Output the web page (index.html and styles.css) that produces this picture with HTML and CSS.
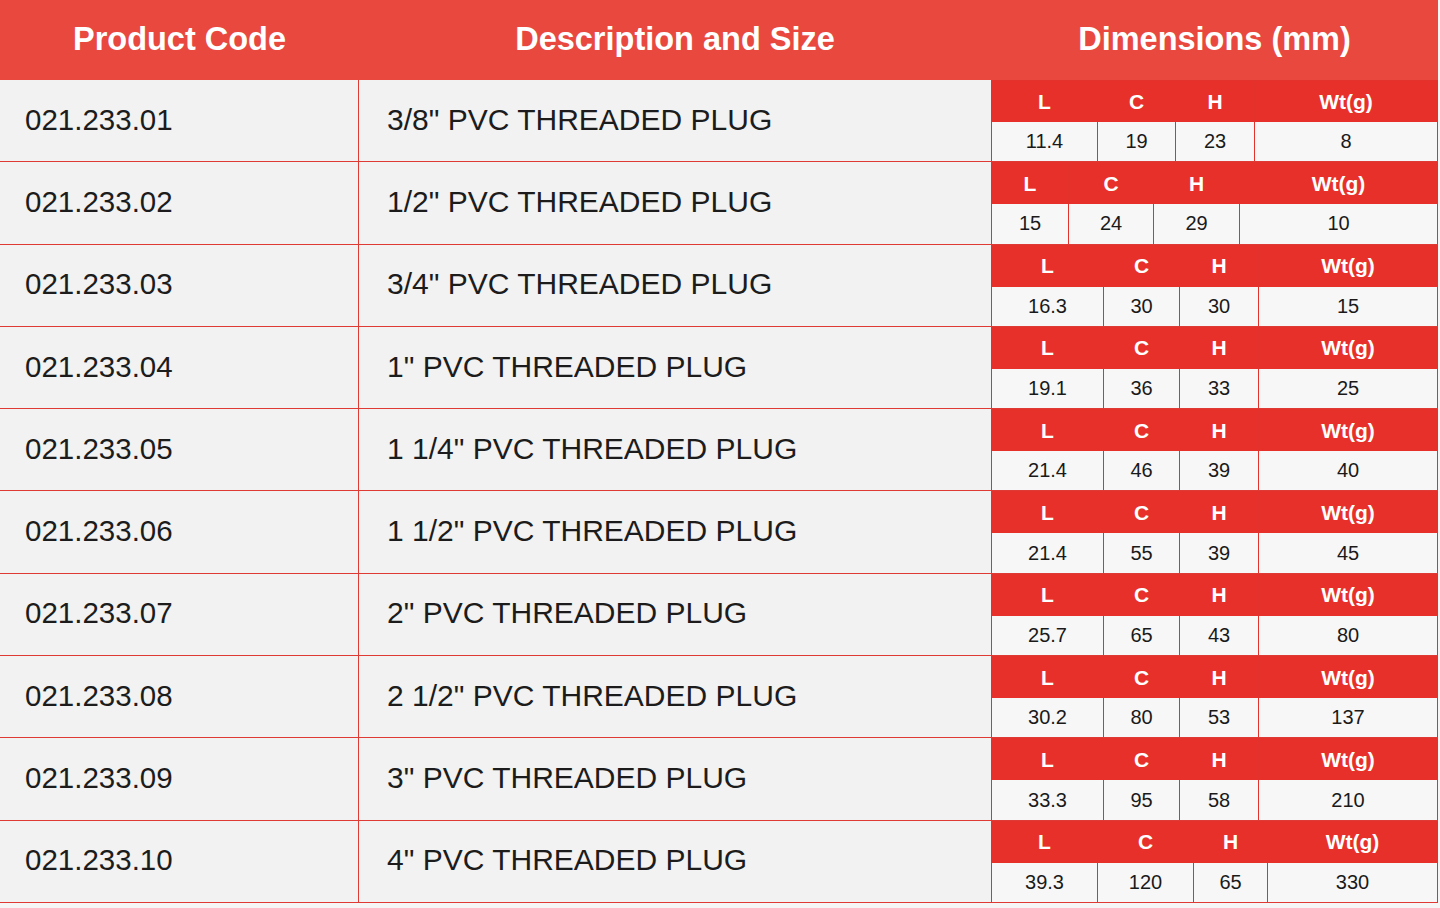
FILE: index.html
```html
<!DOCTYPE html>
<html lang="en">
<head>
<meta charset="utf-8">
<title>PVC Threaded Plug</title>
<link rel="stylesheet" href="styles.css">
</head>
<body>
<div class="table">
  <div class="head">
    <div class="hcell">Product Code</div>
    <div class="hcell">Description and Size</div>
    <div class="hcell">Dimensions (mm)</div>
  </div>

  <div class="row">
    <div class="code">021.233.01</div>
    <div class="desc">3/8" PVC THREADED PLUG</div>
    <div class="dims dims-a">
      <div class="lab">L</div><div class="lab">C</div><div class="lab">H</div><div class="lab">Wt(g)</div>
      <div class="val">11.4</div><div class="val">19</div><div class="val">23</div><div class="val">8</div>
    </div>
  </div>

  <div class="row">
    <div class="code">021.233.02</div>
    <div class="desc">1/2" PVC THREADED PLUG</div>
    <div class="dims dims-b">
      <div class="lab">L</div><div class="lab">C</div><div class="lab">H</div><div class="lab">Wt(g)</div>
      <div class="val">15</div><div class="val">24</div><div class="val">29</div><div class="val">10</div>
    </div>
  </div>

  <div class="row">
    <div class="code">021.233.03</div>
    <div class="desc">3/4" PVC THREADED PLUG</div>
    <div class="dims dims-c">
      <div class="lab">L</div><div class="lab">C</div><div class="lab">H</div><div class="lab">Wt(g)</div>
      <div class="val">16.3</div><div class="val">30</div><div class="val">30</div><div class="val">15</div>
    </div>
  </div>

  <div class="row">
    <div class="code">021.233.04</div>
    <div class="desc">1" PVC THREADED PLUG</div>
    <div class="dims dims-c">
      <div class="lab">L</div><div class="lab">C</div><div class="lab">H</div><div class="lab">Wt(g)</div>
      <div class="val">19.1</div><div class="val">36</div><div class="val">33</div><div class="val">25</div>
    </div>
  </div>

  <div class="row">
    <div class="code">021.233.05</div>
    <div class="desc">1 1/4" PVC THREADED PLUG</div>
    <div class="dims dims-c">
      <div class="lab">L</div><div class="lab">C</div><div class="lab">H</div><div class="lab">Wt(g)</div>
      <div class="val">21.4</div><div class="val">46</div><div class="val">39</div><div class="val">40</div>
    </div>
  </div>

  <div class="row">
    <div class="code">021.233.06</div>
    <div class="desc">1 1/2" PVC THREADED PLUG</div>
    <div class="dims dims-c">
      <div class="lab">L</div><div class="lab">C</div><div class="lab">H</div><div class="lab">Wt(g)</div>
      <div class="val">21.4</div><div class="val">55</div><div class="val">39</div><div class="val">45</div>
    </div>
  </div>

  <div class="row">
    <div class="code">021.233.07</div>
    <div class="desc">2" PVC THREADED PLUG</div>
    <div class="dims dims-c">
      <div class="lab">L</div><div class="lab">C</div><div class="lab">H</div><div class="lab">Wt(g)</div>
      <div class="val">25.7</div><div class="val">65</div><div class="val">43</div><div class="val">80</div>
    </div>
  </div>

  <div class="row">
    <div class="code">021.233.08</div>
    <div class="desc">2 1/2" PVC THREADED PLUG</div>
    <div class="dims dims-c">
      <div class="lab">L</div><div class="lab">C</div><div class="lab">H</div><div class="lab">Wt(g)</div>
      <div class="val">30.2</div><div class="val">80</div><div class="val">53</div><div class="val">137</div>
    </div>
  </div>

  <div class="row">
    <div class="code">021.233.09</div>
    <div class="desc">3" PVC THREADED PLUG</div>
    <div class="dims dims-c">
      <div class="lab">L</div><div class="lab">C</div><div class="lab">H</div><div class="lab">Wt(g)</div>
      <div class="val">33.3</div><div class="val">95</div><div class="val">58</div><div class="val">210</div>
    </div>
  </div>

  <div class="row">
    <div class="code">021.233.10</div>
    <div class="desc">4" PVC THREADED PLUG</div>
    <div class="dims dims-d">
      <div class="lab">L</div><div class="lab">C</div><div class="lab">H</div><div class="lab">Wt(g)</div>
      <div class="val">39.3</div><div class="val">120</div><div class="val">65</div><div class="val">330</div>
    </div>
  </div>
</div>
</body>
</html>
```

FILE: styles.css
```css
html, body {
  margin: 0;
  padding: 0;
}

body {
  background: #f6f6f6;
  font-family: "Liberation Sans", Arial, sans-serif;
  color: #1c1c1c;
  width: 1440px;
  height: 908px;
  overflow: hidden;
}

.table {
  width: 1438px;
  display: flex;
  flex-direction: column;
}

.head {
  height: 80px;
  background: #e9483f;
  display: grid;
  grid-template-columns: 359px 632px 1fr;
  align-items: center;
}

.hcell {
  color: #ffffff;
  font-weight: 700;
  font-size: 32.5px;
  text-align: center;
  padding-bottom: 2px;
}

.row {
  height: 82.3px;
  box-sizing: border-box;
  border-bottom: 1px solid #df3a34;
  background: #f2f2f2;
  display: grid;
  grid-template-columns: 359px 632px 1fr;
}

.code {
  border-right: 1px solid #df3a34;
  display: flex;
  align-items: center;
  padding-left: 25px;
  padding-bottom: 2px;
  font-size: 29.5px;
}

.desc {
  display: flex;
  align-items: center;
  padding-left: 28px;
  padding-bottom: 2px;
  font-size: 30px;
}

.dims {
  display: grid;
  grid-template-rows: 41px 1fr;
  column-gap: 1px;
  background: #e3322b;
  padding: 1px 1px 0 1px;
}

.dims-a { grid-template-columns: 105px 77px 78px 1fr; }
.dims-b { grid-template-columns: 76px 84px 85px 1fr; }
.dims-c { grid-template-columns: 111px 75px 78px 1fr; }
.dims-d { grid-template-columns: 105px 95px 73px 1fr; }

.lab {
  background: #e8302a;
  color: #ffffff;
  font-weight: 700;
  font-size: 21px;
  display: flex;
  align-items: center;
  justify-content: center;
}

.val {
  background: #f7f7f7;
  font-size: 20px;
  display: flex;
  align-items: center;
  justify-content: center;
  color: #1a1a1a;
}
```
